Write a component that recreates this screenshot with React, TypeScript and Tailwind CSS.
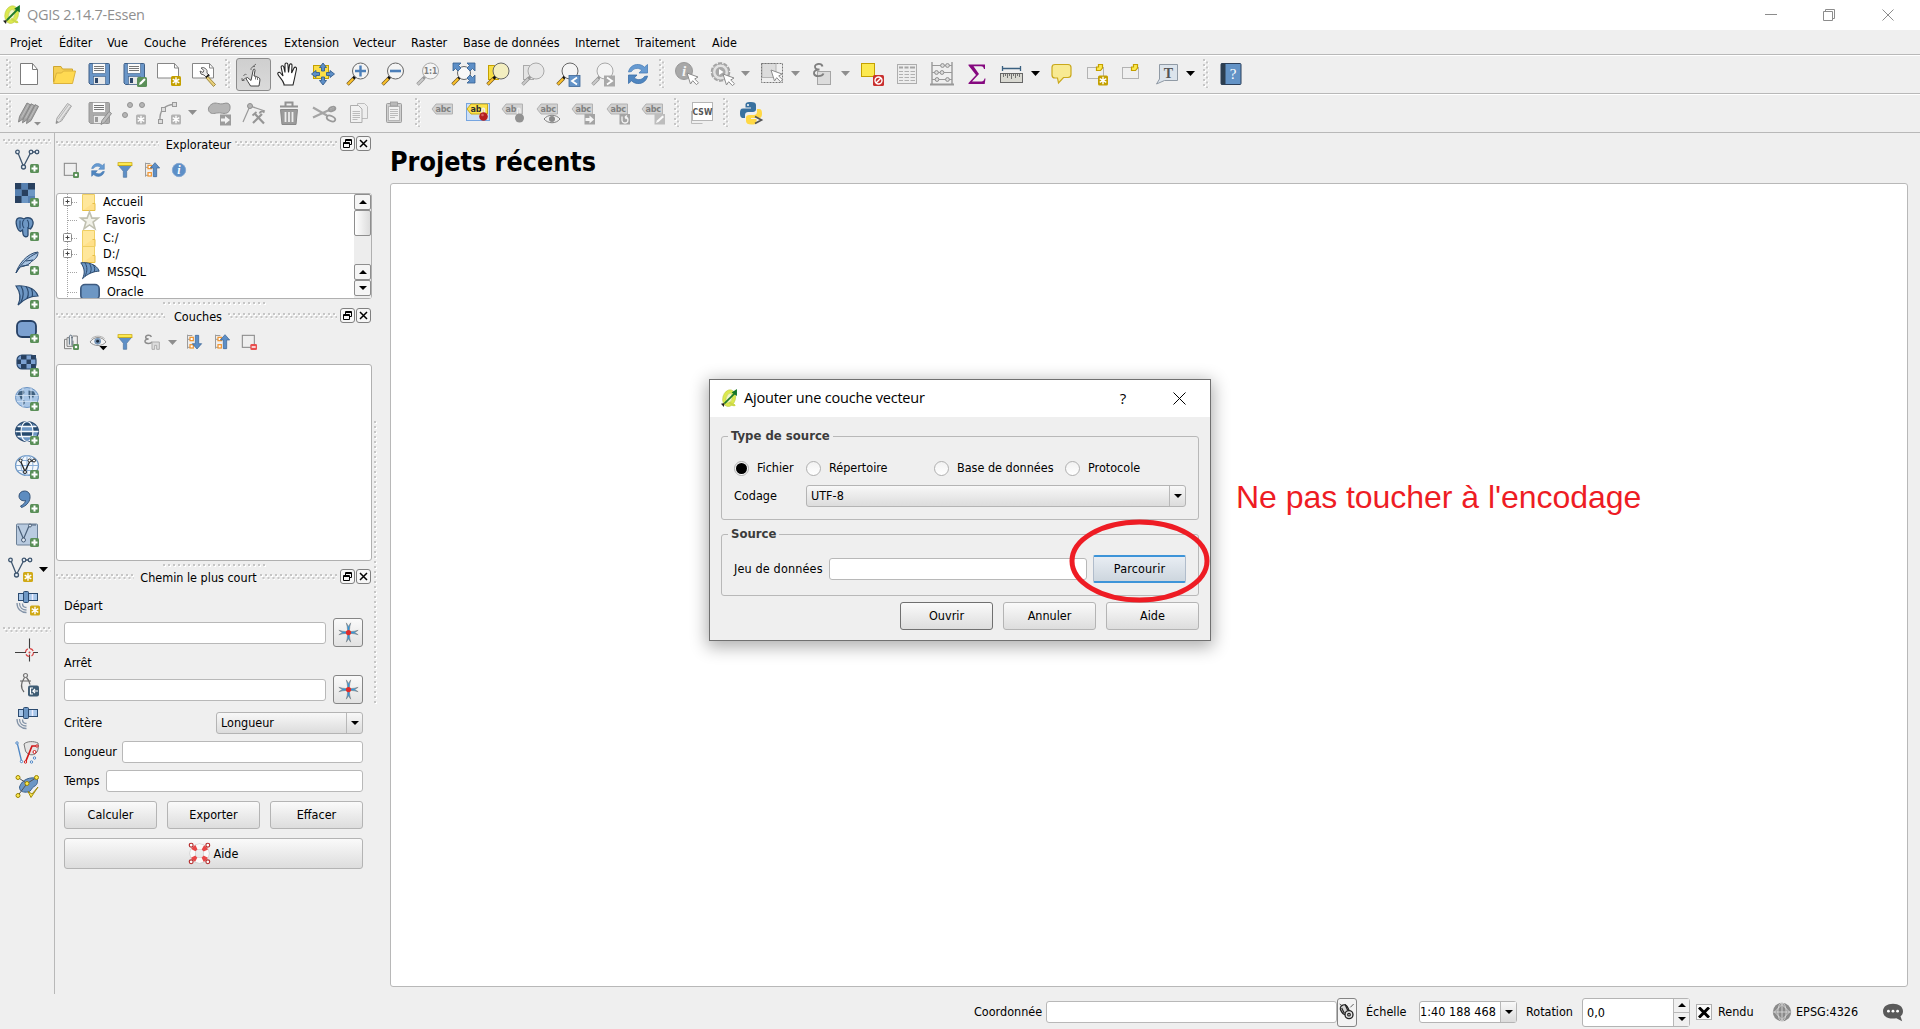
import React, { ReactNode } from "react";

const BLUE = "#6d97c4";
const NAVY = "#2b4a6f";

function Svg({ s = 24, children }: { s?: number; children: ReactNode }) {
  return (
    <svg width={s} height={s} viewBox="0 0 24 24" fill="none" className="block shrink-0 overflow-visible">
      {children}
    </svg>
  );
}

/* ---------- badges ---------- */
const Plus = () => (
  <g>
    <rect x="15" y="15" width="9" height="9" rx="1.5" fill="#5a8f58" />
    <path d="M19.5 16.5v6M16.5 19.5h6" stroke="#fff" strokeWidth="2" />
  </g>
);
const Star = ({ c = "#c4a000", x = 14, y = 14 }: { c?: string; x?: number; y?: number }) => (
  <g transform={`translate(${x} ${y})`}>
    <rect width="10" height="10" rx="1.5" fill={c} />
    <path d="M5 1.2v7.6M1.7 3.1l6.6 3.8M8.3 3.1L1.7 6.9" stroke="#fff" strokeWidth="1.4" />
  </g>
);

/* ---------- file toolbar ---------- */
const NewDoc = () => (
  <Svg>
    <path d="M3.5 1.5h12l5 6v15h-17z" fill="#fff" stroke="#7b7b7b" />
    <path d="M15.500 1.500v6h5" stroke="#7b7b7b" />
  </Svg>
);
const Open = () => (
  <Svg>
    <path d="M1.500 20V4.500h7.500l1.500 2.500h10v4" fill="#f5cf52" stroke="#cfa630" />
    <path d="M1.500 21.500L4.500 11h5l2-2h12l-3 12.500z" fill="#ffda52" stroke="#dbb23c" />
  </Svg>
);
const Floppy = ({ body = "#6a96c8", line = "#3e5f87", slot = "#2e4769" }) => (
  <g>
    <path d="M2.500 1.500h19a1 1 0 0 1 1 1v19a1 1 0 0 1-1 1h-18l-1.500-1.500v-18.500z" fill={body} stroke={line} />
    <rect x="5.500" y="1.500" width="13" height="10" fill="#fafafa" stroke={line} strokeWidth=".6" />
    <path d="M7 4.500h10M7 6.500h10M7 8.500h10" stroke="#777" />
    <rect x="6.500" y="14.500" width="12" height="8" fill="#e9e9e9" stroke={line} strokeWidth=".6" />
    <rect x="8" y="16" width="3" height="5" fill={slot} />
  </g>
);
const Save = () => (<Svg><Floppy /></Svg>);
const SaveAs = () => (
  <Svg>
    <Floppy />
    <rect x="15" y="15" width="10" height="10" rx="1.500" fill="#5a8f58" />
    <path d="M17 23l.8-2.500 4.400-4.200 1.500 1.500-4.300 4.400z" fill="#fff" />
  </Svg>
);
const Composer = () => (
  <Svg>
    <path d="M.5 1.500h17l4 4.500v10h-21z" fill="#fff" stroke="#868686" />
    <path d="M17.500 1.500v4.500h4" stroke="#868686" />
    <Star x={14} y={14} />
  </Svg>
);
const Manager = () => (
  <Svg>
    <path d="M.5 1.500h17l4 4.500v10h-21z" fill="#fff" stroke="#868686" />
    <path d="M17.500 1.500v4.500h4" stroke="#868686" />
    <path d="M9 6a4.300 4.300 0 0 1 6 5l2.500 3-2.500 2-3-3a4 4 0 0 1-4-4l3 1.500 1-2z" fill="#eee" stroke="#555" strokeWidth=".9" />
    <path d="M15.500 14l8 8.500-2 2-7.500-8.500z" fill="#e8cf7a" stroke="#8c7528" strokeWidth=".8" />
    <path d="M14 15.500l3-3" stroke="#111" strokeWidth="1.500" />
  </Svg>
);
const Touch = () => (
  <Svg>
    <path d="M9 22c-1.500-2.500-3-4.500-4-6.500l1.500-1 3.500 3L12.200 7c.4-1.300 2-1 1.800.4L13 13l1.500.3 1.500.7 1.500.5c1.500.6 1.500 2 1.300 3.500L18 23H9.500z" fill="#fff" stroke="#333" strokeWidth=".9" />
    <path d="M10 7c-.5-2 1.500-4 4-3.500M12 3.500L15 1M1 17.500l4.500-3M1 17.500v-2.500M1 17.500h2.500M14.500 13.500v3M16.500 14.500v2.500M2.500 13c.5-1.500 2-2 3-1.500" stroke="#555" strokeWidth=".8" />
  </Svg>
);
const Pan = () => (
  <Svg>
    <path d="M8 22c-1-4-4.500-6.500-6-9.500-1-2 1.200-3 2.500-1.500L7 14 5.200 5.500c-.4-2 2-2.500 2.600-.5L9 10.500V2.500c0-2 2.700-2 2.900 0l.6 8 1-7.500c.4-1.800 2.700-1.400 2.500.5L15.600 11 18 6c1-1.700 2.900-.8 2.500 1l-2 9.500L17 23H8z" fill="#fff" stroke="#222" strokeWidth="1.100" />
  </Svg>
);
const PanSel = () => (
  <Svg>
    <rect x="2.500" y="3.500" width="15" height="13" fill="#fcdf47" stroke="#c4a000" />
    <path d="M12 1l3.500 4.500h-2V9h-3V5.500h-2zM12 23l-3.500-4.500h2V15h3v3.500h2zM.5 12l4.500-3.500v2h3.500v3H5v2zM23.500 12L19 8.500v2h-3.500v3H19v2z" fill="#5d8fc7" stroke="#345e8f" strokeWidth=".9" />
  </Svg>
);
const Lens = ({ gray = false, cx = 14.500, cy = 9, r = 8, fill = "#f4f4f4" }) => (
  <g>
    <path d={`M${cx - r * 0.65} ${cy + r * 0.65}L7 17`} stroke={gray ? "#999" : "#111"} strokeWidth="3" />
    <path d="M7.500 16.500L1.500 22.500" stroke={gray ? "#909090" : "#6b5520"} strokeWidth="3.400" />
    <path d="M7.200 16.800L1.800 22.200" stroke={gray ? "#c9c9c9" : "#fbc02a"} strokeWidth="2.200" />
    <circle cx={cx} cy={cy} r={r} fill={fill} stroke={gray ? "#a9a9a9" : "#666"} />
  </g>
);
const ZoomIn = () => (<Svg><Lens /><path d="M14.500 3.500v11M9 9h11" stroke="#4c7fb9" strokeWidth="2.400" /></Svg>);
const ZoomOut = () => (<Svg><Lens /><path d="M9 9h11" stroke="#4c7fb9" strokeWidth="2.600" /></Svg>);
const ZoomNative = () => (
  <Svg><Lens gray /><text x="14.500" y="12" textAnchor="middle" fontFamily="DejaVu Sans" fontWeight="700" fontSize="8.500" fill="#808080">1:1</text></Svg>
);
const ZoomFull = () => (
  <Svg>
    <Lens cx={13} cy={11} r={6.500} fill="#f8f8f8" />
    <path d="M2 1h8l-2.500 2.500 2.500 2.500-3 3-2.500-2.500L2 9zM24 1v8l-2.500-2.500L19 9l-3-3 2.500-2.500L16 1zM24 21h-8l2.500-2.500L16 16l3-3 2.500 2.500L24 13z" fill="#5d8fc7" stroke="#345e8f" strokeWidth=".8" />
  </Svg>
);
const ZoomSel = () => (<Svg><rect x="2.500" y="3.500" width="10" height="14" fill="#f7df45" stroke="#c4a000" /><Lens cx={15} fill="#f3eec0" /></Svg>);
const ZoomLayer = () => (<Svg><rect x="2.500" y="3.500" width="10" height="14" fill="#e4e4e4" stroke="#aaa" /><Lens gray cx={15} fill="#e8e8e8" /></Svg>);
const ZoomLast = () => (
  <Svg><Lens cx={14} /><rect x="13" y="13.500" width="11" height="11" fill="#6393c8" stroke="#3d6798" strokeWidth=".8" /><path d="M21 15.500L16 19l5 3.500" stroke="#fff" strokeWidth="1.800" /></Svg>
);
const ZoomNext = () => (
  <Svg><Lens gray cx={14} /><rect x="13" y="13.500" width="11" height="11" fill="#a9a9a9" /><path d="M16 15.500l5 3.500-5 3.500" stroke="#fff" strokeWidth="1.800" /></Svg>
);
const Refresh = ({ s = 24 }: { s?: number }) => (
  <Svg s={s}>
    <path d="M2.500 10C3.500 4.500 9 1 15 3c1.500.5 2.500 1.300 3.400 2.200L21.500 2.500V11H13l2.800-3C11.500 5 7.500 6.500 5.500 9.500z" fill="#679bd2" stroke="#4a7fb8" strokeWidth=".8" />
    <path d="M21.500 14c-1 5.500-6.500 9-12.500 7-1.500-.5-2.500-1.300-3.400-2.200L2.500 21.500V13H11l-2.800 3c4.300 3 8.300 1.500 10.300-1.500z" fill="#4f86c0" stroke="#3b6ea8" strokeWidth=".8" />
  </Svg>
);
const Cursor = ({ x = 12, y = 11 }) => (
  <path transform={`translate(${x} ${y})`} d="M0 0l3.500 11 2.200-3.300 3.800 4 2-2-3.800-3.700 3.300-2z" fill="#fff" stroke="#8c8c8c" />
);
const Identify = () => (
  <Svg>
    <circle cx="9" cy="9" r="8.500" fill="#a8a8a8" stroke="#999" />
    <text x="9" y="14" textAnchor="middle" fontFamily="Liberation Serif" fontStyle="italic" fontWeight="700" fontSize="15" fill="#f4f4f4">i</text>
    <Cursor />
  </Svg>
);
const Action = () => (
  <Svg>
    <circle cx="10.500" cy="10" r="8.800" stroke="#a2a2a2" strokeWidth="2" strokeDasharray="4.200 1.320" />
    <circle cx="10.500" cy="10" r="8" fill="#e2e2e2" stroke="#a8a8a8" />
    <circle cx="10.500" cy="10" r="5" fill="#a8a8a8" />
    <path d="M9 7l4.500 3L9 13z" fill="#fff" />
    <Cursor x={13} y={12} />
  </Svg>
);
const SelectBox = () => (
  <Svg>
    <rect x="2" y="1.500" width="14" height="14" fill="#dcdcdc" stroke="#b5b5b5" />
    <rect x="1.500" y="1.500" width="21" height="19" stroke="#777" strokeDasharray="2 1" />
    <Cursor x={11} y={8} />
  </Svg>
);
const Expr = () => (
  <Svg>
    <rect x="7.500" y="9.500" width="13" height="13" fill="#dcdcdc" stroke="#a5a5a5" />
    <path d="M12.500 4.500c-1-4-8-3-7.500.5.200 2 2.500 2.500 4.500 2.500C6.500 7.500 3.500 9 4 11.500c.5 3.500 8 3.500 9.500 0" stroke="#808080" strokeWidth="1.900" />
  </Svg>
);
const Deselect = () => (
  <Svg>
    <rect x="1.500" y="1.500" width="13" height="13" fill="#fce94f" stroke="#c4a000" />
    <rect x="13" y="13" width="11" height="11" rx="1.500" fill="#c9302f" />
    <circle cx="18.500" cy="18.500" r="3.500" stroke="#fff" strokeWidth="1.400" />
    <path d="M16 21l5-5" stroke="#fff" strokeWidth="1.400" />
  </Svg>
);
const TableI = () => (
  <Svg>
    <rect x="2.500" y="2.500" width="19" height="19" fill="#ededed" stroke="#adadad" />
    <path d="M4 5.500h4M9.500 5.500h4M15 5.500h5" stroke="#a5a5a5" strokeWidth="2" />
    <path d="M4 9.500h4M9.500 9.500h4.500M15.500 9.500h4.500M4 12.500h4M9.500 12.500h4.500M15.500 12.500h4.500M4 15.500h4M9.500 15.500h4.500M15.500 15.500h4.500M4 18.500h4M9.500 18.500h4.500M15.500 18.500h4.500" stroke="#b0b0b0" />
  </Svg>
);
const Abacus = () => (
  <Svg>
    <path d="M2 0v22M22 0v22" stroke="#999" strokeWidth="1.400" />
    <path d="M0 22.500h24" stroke="#999" strokeWidth="2" />
    <path d="M2 3.500h20M2 10.500h20M2 17.500h20" stroke="#999" />
    <g fill="#ddd" stroke="#8e8e8e">
      <circle cx="12.500" cy="3.500" r="1.900" /><circle cx="17.500" cy="3.500" r="1.900" />
      <circle cx="6.500" cy="10.500" r="1.900" /><circle cx="12" cy="10.500" r="1.900" />
      <circle cx="7" cy="17.500" r="1.900" /><circle cx="17.500" cy="17.500" r="1.900" />
    </g>
  </Svg>
);
const Sigma = () => (
  <Svg>
    <path d="M3.500 2.500h16.500v4.500h-1c-.5-2-1.500-2.700-3-2.700H8.500L14 12l-7 7.500h9.500c1.800 0 2.500-1 3-3h1l-.8 5.500H3.500v-1l7.500-8L3.500 3.500z" fill="#85087f" />
  </Svg>
);
const Measure = () => (
  <Svg>
    <path d="M2.500 6.500h18M2.500 4v5M20.500 4v5" stroke="#3b6080" strokeWidth="1.300" />
    <rect x=".5" y="11.500" width="22" height="9" fill="#d9d9d2" stroke="#666" />
    <path d="M3.500 12v3M5.500 12v2M7.500 12v4M9.500 12v2M11.500 12v5M13.500 12v2M15.500 12v4M17.500 12v2M19.500 12v3" stroke="#555" strokeWidth=".8" />
  </Svg>
);
const MapTip = () => (
  <Svg>
    <path d="M5 2.500h13c2 0 3 1 3 3v7c0 2-1 3-3 3h-4.500L8.500 21l-1-5H5c-2 0-3-1-3-3V5.500c0-2 1-3 3-3z" fill="#f8ea92" stroke="#c9a81c" strokeWidth="1.200" />
  </Svg>
);
const Bookmark = ({ add = false }: { add?: boolean }) => (
  <Svg>
    <rect x="2.500" y="5.500" width="16" height="11" stroke="#777" strokeDasharray="1 1" />
    <path d="M11.500 5V8.500h4l2-2.500V2.500h-4V5z" fill="#fce94f" stroke="#c4a000" strokeWidth="1.200" />
    {add && <Star x={13} y={13.500} />}
  </Svg>
);
const Annot = () => (
  <Svg>
    <path d="M4.500 2.500h18v16H9.500L1.500 22l3-5z" fill="#dce4ec" stroke="#909aa5" />
    <text x="13.500" y="15.500" textAnchor="middle" fontFamily="Liberation Serif" fontWeight="700" fontSize="14" fill="#555">T</text>
  </Svg>
);
const Book = () => (
  <Svg>
    <rect x="2" y="1.500" width="20" height="21" rx="1" fill="#6393c6" stroke="#2b3f5a" />
    <rect x="2" y="1.500" width="4.500" height="21" fill="#2c3e50" />
    <text x="14" y="17" textAnchor="middle" fontFamily="Liberation Serif" fontSize="15" fill="#fff">?</text>
  </Svg>
);

/* ---------- editing toolbar ---------- */
const Pencils = () => (
  <Svg>
    {[8, 4, 0].map((d) => (
      <g key={d} transform={`translate(${d} ${d / 5})`}>
        <path d="M1.500 21l1-5.500L10 2l3.500 1.800L6 18z" fill="#a4a4a4" stroke="#868686" />
        <path d="M4.500 16.500L11.500 3.500" stroke="#c4c4c4" strokeWidth=".8" />
      </g>
    ))}
    <path d="M17 21h7l-3.500 3.500z" fill="#8e8e8e" />
  </Svg>
);
const Pencil = () => (
  <Svg>
    <path d="M4 22.500l1-5.500L15.500 2.500l4 2.500L9.500 20z" fill="#e3e3e3" stroke="#a5a5a5" />
    <path d="M6 18.500L16.500 4M8.500 19.500l10-14" stroke="#b5b5b5" />
    <path d="M4 22.500l.5-3 2 1.500z" fill="#888" />
  </Svg>
);
const SaveEdits = () => (
  <Svg>
    <Floppy body="#aaa" line="#969696" slot="#999" />
    <path d="M14 23.500l1-4 7-9 2.500 2-7 9z" fill="#bdbdbd" stroke="#8d8d8d" />
  </Svg>
);
const Points = () => (
  <Svg>
    <g fill="#b5b5b5" stroke="#939393"><circle cx="8" cy="4" r="2.500" /><circle cx="20" cy="4" r="2.500" /><circle cx="3" cy="14" r="2.500" /></g>
    <Star c="#b3b3b3" x={14} y={13.500} />
  </Svg>
);
const Curve = () => (
  <Svg>
    <path d="M3 20C2 10 8 3 18 3.500" stroke="#9a9a9a" strokeWidth="1.400" />
    <g fill="#ddd" stroke="#9a9a9a"><rect x="15.500" y="1.500" width="4" height="4" /><rect x="4.500" y="6.500" width="4" height="4" /><rect x="1.500" y="18.500" width="4" height="4" /></g>
    <Star c="#b3b3b3" x={14} y={13.500} />
  </Svg>
);
const MoveFeat = () => (
  <Svg>
    <path d="M5 3c4-2.500 7 1 12-.5 5-1.500 6.500 1.500 6 5-.5 5-5 5.500-9 4.500-4-1-8 2-11-.5C0 9 1.500 5 5 3z" fill="#b5b5b5" stroke="#929292" />
    <rect x="13" y="13.500" width="11" height="11" fill="#9c9c9c" />
    <path d="M14 17.500h4v-2.500l5 4-5 4v-2.500h-4z" fill="#f2f2f2" />
  </Svg>
);
const NodeTool = () => (
  <Svg>
    <path d="M1 21L8 5l15 5" stroke="#9a9a9a" strokeWidth="1.200" />
    <circle cx="8" cy="5" r="2.500" fill="#b5b5b5" stroke="#8f8f8f" />
    <path d="M11 22l9-9M13 13l9 9.500" stroke="#969696" strokeWidth="2.200" />
    <path d="M10.500 14.500l4-3.500M17.500 12.500c1-2.500 3-2.500 5-1" stroke="#969696" strokeWidth="1.800" />
  </Svg>
);
const Trash = () => (
  <Svg>
    <path d="M3.500 8.500h17L19 23.500H5z" fill="#9b9b9b" stroke="#888" />
    <path d="M8.500 11v10M12 11v10M15.500 11v10" stroke="#ededed" strokeWidth="1.800" />
    <path d="M3 5.500h18M8.500 5V1.500h7V5" stroke="#929292" strokeWidth="2" />
  </Svg>
);
const Cut = () => (
  <Svg>
    <path d="M1 6.500l14 8M1 16.500l14-6.500 8-3" stroke="#a5a5a5" strokeWidth="2.200" />
    <ellipse cx="19" cy="17.500" rx="4.500" ry="2.500" transform="rotate(25 19 17.500)" stroke="#9a9a9a" strokeWidth="1.800" />
    <ellipse cx="20" cy="8" rx="3.500" ry="2" transform="rotate(-20 20 8)" stroke="#9a9a9a" strokeWidth="1.800" />
  </Svg>
);
const Copy = () => (
  <Svg>
    <path d="M10.500 2.500h7l3 3v12h-10z" fill="#eee" stroke="#bdbdbd" />
    <path d="M3.500 4.500h8l3.500 3.500v13.500H3.500z" fill="#f1f1f1" stroke="#adadad" />
    <path d="M5.500 10.500h7.500M5.500 12.500h7.500M5.500 14.500h7.500M5.500 16.500h7.500M5.500 18.500h5" stroke="#bcbcbc" />
  </Svg>
);
const Paste = () => (
  <Svg>
    <rect x="4.500" y="2.500" width="15" height="19" rx="1" fill="#cfcfcf" stroke="#9d9d9d" />
    <rect x="6.500" y="5.500" width="11" height="14" fill="#f1f1f1" stroke="#b5b5b5" />
    <rect x="8.500" y="1" width="7" height="4" fill="#b9b9b9" stroke="#999" strokeWidth=".8" />
    <path d="M8 8.500h8M8 10.500h8M8 12.500h8M8 14.500h8M8 16.500h5" stroke="#bcbcbc" />
  </Svg>
);

/* ---------- label toolbar ---------- */
const Tag = ({ yellow = false, t = "abc" }: { yellow?: boolean; t?: string }) => (
  <g>
    <path d="M1 8l4-5h16.500v10H5z" fill={yellow ? "#fce34b" : "#d2d2d2"} stroke={yellow ? "#c9a81c" : "#b2b2b2"} />
    <text x="4.500" y="11" fontFamily="DejaVu Sans" fontWeight="700" fontSize="9" letterSpacing="-.3" fill={yellow ? "#2f2f2f" : "#808080"}>{t}</text>
  </g>
);
const Label0 = () => (<Svg><Tag /></Svg>);
const Label1 = () => (
  <Svg>
    <rect x=".5" y="2.500" width="23" height="17" fill="#cfe0f5" stroke="#76a5e0" />
    <Tag yellow t="ab" />
    <path d="M16 13V8.500c0-1.500 2.500-1.500 2.500 0V13" stroke="#eee" strokeWidth="1.600" />
    <circle cx="17.500" cy="15.500" r="4.300" fill="#b52020" />
    <circle cx="16.500" cy="14" r="1.300" fill="#d46060" />
  </Svg>
);
const Label2 = () => (
  <Svg><Tag t="ab" /><path d="M16.500 13V8.500c0-1.500 2.500-1.500 2.500 0V13" stroke="#eee" strokeWidth="1.600" /><circle cx="18.500" cy="17" r="4.500" fill="#929292" /></Svg>
);
const Label3 = () => (
  <Svg><Tag /><path d="M8 18c4-5 12-5 16 0-4 5-12 5-16 0z" fill="#eee" stroke="#808080" /><circle cx="16" cy="18" r="3" fill="#8a8a8a" /></Svg>
);
const Label4 = () => (
  <Svg><Tag /><rect x="13.500" y="13" width="10.500" height="10.500" fill="#a4a4a4" /><path d="M14.500 17h4v-2.500l4.500 4-4.500 4V20h-4z" fill="#f4f4f4" /></Svg>
);
const Label5 = () => (
  <Svg><Tag /><rect x="13.500" y="13" width="10.500" height="10.500" fill="#a4a4a4" /><path d="M16 15.500v4a3 3 0 1 0 3-3.500M19 16l2-1.500M19 16l1.500 2" stroke="#f4f4f4" strokeWidth="1.300" /></Svg>
);
const Label6 = () => (
  <Svg><Tag /><rect x="13.500" y="13" width="10.500" height="10.500" fill="#bdbdbd" /><path d="M15 22l1-2.500 5.500-5 1.500 1.500-5.500 5z" fill="#fafafa" /></Svg>
);
const Csw = () => (
  <Svg>
    <path d="M1.500 10v12.500h11" stroke="#bbb" />
    <rect x="2.500" y="1.500" width="20" height="18" fill="#fff" stroke="#b5b5b5" />
    <text x="12.500" y="13.500" textAnchor="middle" fontFamily="DejaVu Sans" fontWeight="700" fontSize="8.500" letterSpacing=".1" fill="#555">CSW</text>
  </Svg>
);
const Python = () => (
  <Svg>
    <path d="M12 1C6.500 1 6.500 2.500 6.500 4v2.500H12v1H4C1.500 7.500 1 9.500 1 12s.5 5 3 5h2v-3c0-2 1.500-3 3-3h5c1.500 0 3-1 3-2.500V4c0-2-1.500-3-5-3z" fill="#39719f" />
    <circle cx="9" cy="4" r="1" fill="#fff" />
    <path d="M12.500 23.500c5.500 0 5-1.500 5-3V18H12v-1h8c2.500 0 3-2 3-4.500s-.5-4.500-3-4.500h-2v3c0 2-1.500 3-3 3h-5c-1.500 0-3 1-3 2.500V20c0 2.500 2 3.500 5.500 3.500z" fill="#ffd845" />
    <path d="M16 15.500l6.500 3.500-6.500 3.500" stroke="#555" strokeWidth="1.700" />
  </Svg>
);

/* ---------- layer toolbar ---------- */
const VectorLine = ({ c = "#3f566f" }) => (
  <g stroke={c} strokeWidth="1.300" fill="#e6edf5">
    <path d="M3 4l5.500 13.500L15.500 4M18 3h3" fill="none" />
    <circle cx="2.500" cy="3" r="1.800" /><circle cx="16" cy="3" r="1.800" /><circle cx="22" cy="3" r="1.800" /><circle cx="8.500" cy="18" r="2" />
  </g>
);
const AddVector = () => (<Svg><VectorLine /><Plus /></Svg>);
const AddRaster = () => (
  <Svg>
    <rect width="20" height="20" fill={BLUE} />
    <path d="M0 0h6.500v6.500H0zM13 0h7v6.500h-7zM6.500 6.500H13V13H6.500zM0 13h6.500v7H0z" fill="#28405f" />
    <path d="M6.500 0H13v6.500H6.500zM0 6.500h6.500V13H0zM13 13h7v7h-7z" fill="#5680b0" />
    <Plus />
  </Svg>
);
const Elephant = () => (
  <Svg>
    <path d="M2 2c2-2 5-1 7 0 2-1.500 6-2 8 .500 2 3 .5 7-1.500 9.500l-2.500-1v7c0 2.500-4.500 2.500-5-1l-.5-4-2 1.500C2 13 0 5 2 2z" fill={BLUE} stroke={NAVY} strokeWidth="1.300" />
    <path d="M9 3c-2 1-2 6 0 8M12 3c2 1 2 6 1 8M5 3.500v8" stroke={NAVY} strokeWidth="1.100" />
    <Plus />
  </Svg>
);
const Feather = () => (
  <Svg>
    <path d="M1 22C3 14 12 2 23 1c0 4-2 7-6 9-2 3-6 5-12 6z" fill="#a9c4e2" stroke={NAVY} strokeWidth="1" />
    <path d="M1 22C6 13 13 6 22 2M7 15l7-1M11 10l7-1" stroke={NAVY} strokeWidth="1" />
    <Plus />
  </Svg>
);
const SailShape = () => (
  <g stroke={NAVY} strokeWidth="1.200">
    <path d="M1 1c7-1 19 1 22 10-6 0-14 3-20 9 3-6 3-12-2-19z" fill={BLUE} />
    <path d="M6 1c3 5 3 10 0 16M11 1.500c3 4 3 8 1 12M16 3.500c2 3 2 5 1 8.500" />
  </g>
);
const AddMssql = () => (<Svg><SailShape /><Plus /></Svg>);
const AddOracle = () => (<Svg><rect x="2" y="2" width="19" height="16" rx="5" fill="#7ba0d0" stroke="#253f63" strokeWidth="1.800" /><Plus /></Svg>);
const AddOracleR = () => (
  <Svg>
    <rect x="2" y="2" width="19" height="14" rx="5" fill="#7ba0d0" />
    <path d="M6 2h5.500v4.500H6zM16 2h5v4.500h-5zM11.500 6.500H16V11h-4.500zM2 6.500h4V11H2zM6 11h5.500v5H6zM16 11h5v5h-5z" fill="#28405f" />
    <rect x="2" y="2" width="19" height="14" rx="5" stroke={NAVY} strokeWidth="1.200" />
    <Plus />
  </Svg>
);
const AddWms = () => (
  <Svg>
    <ellipse cx="12" cy="10.500" rx="11.500" ry="10" fill="#a9c6e6" stroke="#6b93c2" />
    <path d="M4 4.500l5-1 .5 2.500-2.500 2.500.500 2.500-1.500 2-1.500-4-2-1zM13.500 3.500l5.500 1 1.500 3.500-1.500.5-1 3-1.500-3-1.500 0 0 4.500-1.500-4zM8 13l2 1-.5 3-1.500 1z" fill="#40607f" />
    <path d="M.5 8.500h23M8 1v19M16 1v19M2 14.500h20" stroke="#d5e3f3" strokeWidth=".8" />
    <Plus />
  </Svg>
);
const AddWcs = () => (
  <Svg>
    <ellipse cx="12" cy="10.500" rx="11.500" ry="10" fill="#6d97c4" stroke={NAVY} strokeWidth="1.200" />
    <path d="M7 1.500h10l1.500 4h-13zM1 10.500h5.500v5H2.500zM6.500 10.500h11v5h-11zM18 5.500h4L23 10h-5zM2 5.500h4v5H1z" fill="#24496e" />
    <path d="M.5 10.500h23M2.500 5.500h19M2.500 15.500h19" stroke="#f4f8fc" strokeWidth="1.300" />
    <ellipse cx="12" cy="10.500" rx="6" ry="10" stroke="#f4f8fc" strokeWidth="1.200" />
    <Plus />
  </Svg>
);
const AddWfs = () => (
  <Svg>
    <ellipse cx="12" cy="10.500" rx="11.500" ry="10" fill="#f4f8fc" stroke="#6d97c4" strokeWidth="1.200" />
    <path d="M.5 10.500h23M2.500 5.500h19M2.500 15.500h19M12 .5v20" stroke="#8db0d8" />
    <ellipse cx="12" cy="10.500" rx="6" ry="10" stroke="#8db0d8" />
    <path d="M5.500 6l4.500 10.500L15 6h4" stroke="#222" strokeWidth="1.300" />
    <g fill="#fff" stroke="#222"><circle cx="5.500" cy="5.500" r="1.500" /><circle cx="14.500" cy="5.500" r="1.500" /><circle cx="19" cy="5.500" r="1.500" /><circle cx="10" cy="17" r="1.500" /></g>
    <Plus />
  </Svg>
);
const AddCsv = () => (
  <Svg>
    <path d="M9.500 2c4 0 6 3 5.500 7-.5 4.500-4 8-8.500 9.500l-1-1.500c3-1.500 4.500-3 5-5.500-3.500 1-6.500-1-6.500-4.500C4 4 6.500 2 9.500 2z" fill="#5d8cc0" stroke={NAVY} strokeWidth=".9" />
    <Plus />
  </Svg>
);
const AddVirtual = () => (
  <Svg>
    <rect x="1.500" y="1" width="21" height="21" rx="1" fill="#b9cbe0" stroke="#6a7f96" />
    <path d="M3 3l5.500 13L14 3M16 2h5" stroke="#4a5f78" strokeWidth="1.200" />
    <circle cx="8.500" cy="17" r="2" fill="#dde6f0" stroke="#4a5f78" />
    <circle cx="15" cy="2.500" r="1.500" fill="#dde6f0" stroke="#4a5f78" />
    <Plus />
  </Svg>
);
const NewVector = () => (<Svg><VectorLine /><Star c="#d0a916" x={15} y={15} /></Svg>);
const Sat = ({ star = false }: { star?: boolean }) => (
  <Svg>
    <rect x="3.500" y="2.500" width="7" height="7" fill="#a9c8ea" stroke={NAVY} /><rect x="13.500" y="2.500" width="9" height="7" fill="#a9c8ea" stroke={NAVY} />
    <path d="M17.500 3v6" stroke="#eef" strokeWidth="1.500" />
    <rect x="8.500" y=".5" width="5" height="11" rx="1" fill="#6d97c4" stroke={NAVY} />
    <path d="M2 12c0 6 4 9.500 9.500 9.500M4.500 12c0 4.500 3 7 7 7M7.500 12.500c0 2.500 1.500 4 4 4" stroke="#8494a8" strokeWidth="1.300" />
    {star && <Star c="#d0a916" x={15} y={14.500} />}
  </Svg>
);
const Cross = () => (
  <Svg>
    <path d="M14.500 0v10M14.500 16v7M0 14h11M18 14h5" stroke="#3d3d3d" strokeWidth="1.100" transform="translate(0 -.5)" />
    <circle cx="14.500" cy="13.500" r="4" stroke="#d84040" strokeWidth="1.200" strokeDasharray="4 2.300" />
    <circle cx="14.500" cy="13.500" r="1" fill="#d84040" />
  </Svg>
);
const Compass = () => (
  <Svg>
    <circle cx="10.500" cy="2.500" r="2" stroke="#777" strokeWidth="1.200" />
    <path d="M9.500 4.500C6.500 9 4.500 14 9 19M11.500 4.500c2 2 3 4 3.500 7M5 8h11" stroke="#666" strokeWidth="1.200" />
    <rect x="13" y="12.500" width="11" height="11" rx="2" fill="#3e5c74" />
    <path d="M18 15h-2.500v6H18M23 18h-5l2-2M18 18l2 2" stroke="#fff" strokeWidth="1.100" />
  </Svg>
);
const Simplify = () => (
  <Svg>
    <path d="M2 1l4.500 19" stroke="#4d86c5" strokeWidth="1.300" />
    <path d="M9 3c3-3 10-3 14-1 1 4 0 9-3 11-4 2-8 0-9.500-3z" fill="#e4e4e4" stroke="#777" />
    <path d="M10.500 21L17 5h4.500" stroke="#d11919" strokeWidth="1.700" />
    <g fill="#fff" stroke="#4d86c5"><circle cx="2" cy="2" r="1.200" /><circle cx="6.500" cy="20.500" r="1.200" /><circle cx="16.500" cy="21" r="1.200" /><circle cx="19.500" cy="17" r="1.200" /></g>
    <g fill="#fff" stroke="#d11919"><circle cx="10.500" cy="21" r="1.200" /><circle cx="19.500" cy="11" r="1.500" /><circle cx="22" cy="5" r="1.200" /></g>
  </Svg>
);
const Topo = () => (
  <Svg>
    <path d="M4.500 12C7 4 16 1.500 22 3.500c1.500 4-.5 7-3 8-2.500 1-2.500 5-6 5.500-4 .5-8.500 0-8.500-5z" fill="#6d97c4" stroke="#3a618e" />
    <path d="M3 2.500l9 6 9.500-6M3 20.500l9-12" stroke="#555" />
    <g fill="#fce94f" stroke="#9a8200"><circle cx="3" cy="2.500" r="2" /><circle cx="21.500" cy="2.500" r="2" /><circle cx="12" cy="8.500" r="2" /><circle cx="3" cy="20.500" r="2" /></g>
    <path d="M13 16.500l4 2.500 6-7-7 10.500z" fill="#fce94f" stroke="#9a8200" strokeWidth=".9" />
  </Svg>
);

/* ---------- dock icons (16px drawings on a 24 grid) ---------- */
const AddSel = () => (
  <Svg s={16}>
    <rect x="2" y="2" width="18" height="18" stroke="#8b8b8b" strokeWidth="1.600" />
    <rect x="15" y="15" width="9" height="9" rx="2" fill="#5a8f58" /><circle cx="19.500" cy="19.500" r="2" fill="#fff" />
  </Svg>
);
const Funnel = () => (
  <Svg s={16}>
    <path d="M2 5h20l-7.500 9v9h-5v-9z" fill="#5d8fc7" stroke="#4a719d" />
    <rect x="1.500" y="1" width="21" height="4.500" fill="#fce94f" stroke="#c4a000" />
  </Svg>
);
const TreeArrow = ({ down = false }: { down?: boolean }) => (
  <Svg s={16}>
    <path d="M2.250 1v21M2 8h4M2 20h4M1.500 2.250h8" stroke="#9c9c9c" strokeWidth="1.500" />
    <rect x="6" y="5" width="5" height="5" fill="#fff" stroke="#f0932b" strokeWidth="1.800" />
    <rect x="6" y="16" width="5" height="5" fill="#fff" stroke="#f0932b" strokeWidth="1.800" />
    <path d={down ? "M16.500 22.500l-7-8H14V2h5v12.500h4.500z" : "M16.500 1l-7 8H14v13h5V9h4.500z"} fill="#5d8fc7" stroke="#345e8f" />
  </Svg>
);
const Info = () => (
  <Svg s={16}>
    <circle cx="12" cy="12" r="10" fill="#5d8fc7" stroke="#86a9d3" strokeWidth="1.500" />
    <text x="12" y="18" textAnchor="middle" fontFamily="Liberation Serif" fontStyle="italic" fontWeight="700" fontSize="18" fill="#fff">i</text>
  </Svg>
);
const AddGroup = () => (
  <Svg s={16}>
    <path d="M6 8H2.250v14H13M9 5.500H6v13h9V10M12 5.500h3M14 3h7.500v12" stroke="#808080" strokeWidth="1.500" />
    <path d="M9.500 16V5c0-4.500 4-4.500 4 0v12.500" stroke="#4f6478" strokeWidth="1.500" />
    <rect x="15" y="15" width="9" height="9" rx="2" fill="#5a8f58" /><circle cx="19.500" cy="19.500" r="2" fill="#fff" />
  </Svg>
);
const Eye = () => (
  <Svg s={16}>
    <path d="M0 12C6 3 18 3 24 12c-6 7-18 7-24 0z" fill="#f4f4f4" stroke="#888" strokeWidth="1.400" />
    <path d="M2 7C7 2 17 2 22 7" stroke="#aaa" strokeWidth="1.300" />
    <circle cx="11.500" cy="11" r="5" fill="#7796b8" /><circle cx="11.500" cy="11" r="2.200" fill="#1d2c3d" />
    <path d="M14 18h12l-6 6.500z" fill="#000" />
  </Svg>
);
const Eps = () => (
  <Svg s={16}>
    <path d="M11 4.500c-1-4-9-3-8.500.5.200 2 2.500 2.500 4.500 2.500-3 0-6 1.500-5.500 4 .5 3.500 9 3.500 10.500 0" stroke="#8c8c8c" strokeWidth="2.200" />
    <path d="M12 12h11v11h-4v-6h-3v6h-4z" fill="#ddd" stroke="#a9a9a9" strokeWidth="1.400" />
  </Svg>
);
const RemoveSel = () => (
  <Svg s={16}>
    <rect x="2" y="2" width="18" height="18" stroke="#8b8b8b" strokeWidth="1.600" />
    <rect x="14" y="15" width="10" height="9" rx="2" fill="#e84f4f" /><path d="M16 19.500h6" stroke="#fff" strokeWidth="2.200" />
  </Svg>
);
const Logo = ({ s = 20 }: { s?: number }) => (
  <Svg s={s}>
    <ellipse cx="11.500" cy="11.500" rx="6.500" ry="9.500" transform="rotate(15 11.500 11.500)" stroke="#dbe94e" strokeWidth="5" />
    <ellipse cx="11.500" cy="11.500" rx="9" ry="12" transform="rotate(15 11.500 11.500)" stroke="#b9c440" strokeWidth=".7" />
    <ellipse cx="11.500" cy="11.500" rx="4" ry="7" transform="rotate(15 11.500 11.500)" stroke="#b9c440" strokeWidth=".7" fill="#f2f6c8" />
    <path d="M11 18c3-1 5 5 9 3" stroke="#ccd848" strokeWidth="3" />
    <path d="M5 19L19 5" stroke="#1f7a2c" strokeWidth="2.400" />
    <path d="M22.500-1.500v10L15 3.500z" fill="#14742a" /><path d="M0 19.500l5-1-1 5.500z" fill="#222" />
  </Svg>
);

/* ---------- shared pieces ---------- */
function Grip({ h, w, className = "" }: { w: number; h: number; className?: string }) {
  const id = `grip-${w}-${h}`;
  const tall = h > w;
  return (
    <svg width={w} height={h} className={"block shrink-0 " + className}>
      <defs>
        <pattern id={id} width={tall ? 6 : 5} height={tall ? 5 : 6} patternUnits="userSpaceOnUse">
          {tall ? (
            <>
              <rect x="1" y="1" width="2" height="2" fill="#fff" /><rect width="2" height="2" fill="#c6c6c6" />
              <rect x="4" y="3.500" width="2" height="2" fill="#fff" /><rect x="3" y="2.500" width="2" height="2" fill="#c6c6c6" />
            </>
          ) : (
            <>
              <rect x="1" y="1" width="2" height="2" fill="#fff" /><rect width="2" height="2" fill="#c6c6c6" />
              <rect x="3.500" y="4" width="2" height="2" fill="#fff" /><rect x="2.500" y="3" width="2" height="2" fill="#c6c6c6" />
            </>
          )}
        </pattern>
      </defs>
      <rect width={w} height={h} fill={`url(#${id})`} />
    </svg>
  );
}
function Dots({ w, h }: { w: number; h: number }) {
  return (
    <svg width={w} height={h} className="block">
      <defs>
        <pattern id={`dots-${w}`} width="5" height="5" patternUnits="userSpaceOnUse">
          <rect x="1" y="1" width="2" height="2" fill="#fff" /><rect width="2" height="2" fill="#c6c6c6" />
        </pattern>
      </defs>
      <rect width={w} height={h} fill={`url(#dots-${w})`} />
    </svg>
  );
}
const Cell = ({ children, on = false }: { children: ReactNode; on?: boolean }) => (
  <div className={"flex w-[35px] shrink-0 items-center justify-center pr-px " + (on ? "mt-0.5 h-[33px] rounded-[3px] border border-[#8c8c8c] bg-gradient-to-b from-[#cfcfcf] to-[#dadada]" : "h-[34px]")}>{children}</div>
);
const Down = ({ c = "#000" }: { c?: string }) => (
  <div className="flex w-[15px] items-center justify-center pr-1">
    <svg width="9" height="5" viewBox="0 0 9 5" className="shrink-0"><path d="M0 0h9L4.500 5z" fill={c} /></svg>
  </div>
);
const Sep = () => (<div className="flex w-[14px] justify-center pr-[3px]"><Grip w={6} h={29} /></div>);
const Tri = ({ up = false }: { up?: boolean }) => (
  <svg width="8" height="4" viewBox="0 0 8 4" className="block shrink-0"><path d={up ? "M0 4h8L4 0z" : "M0 0h8L4 4z"} fill="#000" /></svg>
);
const Btn = ({ children, className = "" }: { children: ReactNode; className?: string }) => (
  <button className={"flex h-7 w-[93px] items-center justify-center rounded-[3px] border border-[#b4b4b4] bg-gradient-to-b from-[#fafafa] to-[#dddddd] " + className}>{children}</button>
);
const Field = ({ className = "" }: { className?: string }) => (
  <div className={"h-[22px] rounded-[3px] border border-[#b8b8b8] bg-white " + className} />
);
const Combo = ({ children, className = "" }: { children: ReactNode; className?: string }) => (
  <div className={"flex h-[22px] items-center rounded-[3px] border border-[#b4b4b4] bg-gradient-to-b from-[#f8f8f8] to-[#dcdcdc] " + className}>
    <span className="flex-1 pl-1">{children}</span>
    <div className="flex h-full w-[16px] items-center justify-center border-l border-[#b8b8b8]"><Tri /></div>
  </div>
);
function DockTitle({ title, left, right }: { title: string; left: number; right: number }) {
  return (
    <div className="flex h-[17px] items-center pr-px">
      <Grip w={left} h={6} className="-mt-0.5" />
      <span className="flex-1 whitespace-nowrap pl-[3px] text-center">{title}</span>
      <Grip w={right} h={6} className="-mt-0.5 mr-[3px]" />
      <div className="-mt-[3px] mr-px flex h-[15px] w-[15px] items-center justify-center rounded-[3px] border border-[#808080] bg-[#f6f6f6]">
        <svg width="9" height="9" viewBox="0 0 9 9" fill="none" stroke="#000"><path d="M2.500 3V.5h6v5H6.500M2.500 1.500h6" /><path d="M.5 3.500h6v5h-6zM.5 4.500h6" /></svg>
      </div>
      <div className="-mt-[3px] flex h-[15px] w-[15px] items-center justify-center rounded-[3px] border border-[#808080] bg-[#f6f6f6]">
        <svg width="9" height="9" viewBox="0 0 9 9" stroke="#000" strokeWidth="1.500"><path d="M1 1l7 7M8 1L1 8" /></svg>
      </div>
    </div>
  );
}
const DCell = ({ children, w = "w-[27px]" }: { children: ReactNode; w?: string }) => (
  <div className={"flex items-center justify-center " + w}>{children}</div>
);

const Folder = () => (
  <svg width="14" height="17" viewBox="0 0 14 17" className="block"><path d="M.5.5h12v16H.5z" fill="#ffe79b" stroke="#efcf63" /><path d="M10.500 9.500h2.500v7H.5" stroke="#e6bf45" fill="#ffe08a" /></svg>
);
const Fav = () => (
  <Svg s={19}><path d="M12 1l3 8h8l-6.500 5 2.500 8.500-7-5-7 5L7.500 14 1 9h8z" fill="#f1f1e8" stroke="#c0c0b0" strokeWidth="2" /></Svg>
);
const tree: { t: string; h: string; icon: ReactNode; box?: boolean }[] = [
  { t: "Accueil", h: "h-4", icon: <Folder />, box: true },
  { t: "Favoris", h: "h-5", icon: <Fav /> },
  { t: "C:/", h: "h-4", icon: <Folder />, box: true },
  { t: "D:/", h: "h-4", icon: <Folder />, box: true },
  { t: "MSSQL", h: "h-5", icon: <Svg s={20}><SailShape /></Svg> },
  { t: "Oracle", h: "h-5", icon: <Svg s={20}><rect x="1" y="3" width="22" height="18" rx="5" fill="#6d97c4" stroke="#3d5a7f" strokeWidth="2" /></Svg> },
];
const menu: [string, string][] = [
  ["Projet", "w-[49px]"], ["Éditer", "w-[48px]"], ["Vue", "w-[37px]"], ["Couche", "w-[57px]"], ["Préférences", "w-[83px]"],
  ["Extension", "w-[69px]"], ["Vecteur", "w-[58px]"], ["Raster", "w-[52px]"], ["Base de données", "w-[112px]"],
  ["Internet", "w-[60px]"], ["Traitement", "w-[77px]"], ["Aide", "w-[40px]"],
];

const PickIcon = () => (
  <Svg s={21}>
    <g stroke="#808080" strokeWidth=".7" fill="#2f96dd">
      <path d="M9.500 1l2.500 4 2.500-4-1 4-.5 5h-2l-.5-5zM9.500 23l2.500-4 2.500 4-1-4-.5-5h-2l-.5 5zM1 9.500l4 2.500-4 2.500 4-1 5-.5v-2l-5-.5zM23 9.500l-4 2.500 4 2.500-4-1-5-.5v-2l5-.5z" />
    </g>
    <circle cx="12" cy="12" r="3" fill="#e02c2c" />
  </Svg>
);
const Buoy = () => (
  <Svg s={21}>
    <circle cx="12" cy="12" r="8" stroke="#c9c9c9" strokeWidth="7" />
    <circle cx="12" cy="12" r="8" stroke="#fafafa" strokeWidth="5.600" />
    <circle cx="12" cy="12" r="8" stroke="#e84848" strokeWidth="5.600" strokeDasharray="5 7.566" strokeDashoffset="-3.780" />
    <g stroke="#b52a2a" fill="#fff" strokeWidth="1.300"><circle cx="2.500" cy="2.500" r="2.200" /><circle cx="21.500" cy="2.500" r="2.200" /><circle cx="2.500" cy="21.500" r="2.200" /><circle cx="21.500" cy="21.500" r="2.200" /></g>
  </Svg>
);
const PickBtn = () => (
  <div className="flex h-[29px] w-[30px] items-center justify-center rounded-[3px] border border-[#858585] bg-gradient-to-b from-[#fafafa] to-[#e2e2e2]"><PickIcon /></div>
);
const Radio = ({ t, on = false, w = "" }: { t: string; on?: boolean; w?: string }) => (
  <div className={"flex items-center gap-[8px] " + w}>
    <span className="flex h-[15px] w-[15px] items-center justify-center rounded-full border border-[#b0b0b0] bg-gradient-to-b from-[#f2f2f2] to-white">
      {on && <span className="h-[11px] w-[11px] rounded-full bg-black" />}
    </span>
    <span className="whitespace-nowrap">{t}</span>
  </div>
);

function Dialog() {
  return (
    <div className="absolute left-[709px] top-[379px] flex h-[262px] w-[502px] flex-col border border-[#707070] bg-[#efefef] shadow-[0_4px_16px_2px_rgba(0,0,0,0.32)]">
      <div className="flex h-[37px] shrink-0 items-center bg-white pb-px pl-[11px] pr-[24px] font-['Open_Sans',sans-serif] text-[14.500px] [font-stretch:normal]">
        <Logo s={17} />
        <span className="ml-[6px] flex-1 tracking-[-0.2px]">Ajouter une couche vecteur</span>
        <span className="mr-[-1px] w-[12px] text-center text-[15px]">?</span>
        <svg width="13" height="13" viewBox="0 0 13 13" stroke="#000" className="ml-[45px]"><path d="M.5.5l12 12M12.500.5l-12 12" /></svg>
      </div>
      <fieldset className="ml-[11px] mt-[11px] h-[92px] w-[478px] rounded-[3px] border border-[#b8b8b8]">
        <legend className="ml-[6px] h-4 px-[3px] text-[13px] font-bold leading-4 text-[#3c3c3c]">Type de source</legend>
        <div className="mt-[15px] flex h-[18px] items-center pl-[12px]">
          <Radio t="Fichier" on w="w-[72px]" />
          <Radio t="Répertoire" w="w-[128px]" />
          <Radio t="Base de données" w="w-[131px]" />
          <Radio t="Protocole" />
        </div>
        <div className="mt-[8px] flex items-center pl-[12px]">
          <span className="w-[72px]">Codage</span>
          <Combo className="w-[380px]">UTF-8</Combo>
        </div>
      </fieldset>
      <fieldset className="ml-[11px] mt-[6px] h-[70px] w-[478px] rounded-[3px] border border-[#b8b8b8]">
        <legend className="ml-[6px] h-4 px-[3px] text-[13px] font-bold leading-4 text-[#3c3c3c]">Source</legend>
        <div className="mt-[13px] flex items-center pl-[12px]">
          <span className="w-[95px] whitespace-nowrap tracking-[0.15px]">Jeu de données</span>
          <Field className="w-[258px]" />
          <button className="ml-[6px] flex h-7 w-[93px] items-center justify-center rounded-[2px] border-x border-y-2 border-x-[#b0bccb] border-y-[#3d94d8] bg-gradient-to-b from-[#e8edf3] to-[#cdd6de] tracking-[0.15px]">Parcourir</button>
        </div>
      </fieldset>
      <div className="mt-[6px] flex justify-end gap-[10px] pr-[11px]">
        <Btn className="!border-[#707070]">Ouvrir</Btn>
        <Btn>Annuler</Btn>
        <Btn>Aide</Btn>
      </div>
    </div>
  );
}

export default function App() {
  return (
    <div className="relative flex h-[1029px] w-[1920px] flex-col overflow-hidden bg-[#efefef] font-['DejaVu_Sans_Condensed','DejaVu_Sans',sans-serif] text-[12.500px] leading-4 text-black [font-stretch:condensed]">
      {/* title bar */}
      <div className="flex h-[30px] shrink-0 items-center bg-white pb-px pl-[3px] font-['Open_Sans',sans-serif] text-[14.500px] text-[#8f8f8f] [font-stretch:normal]">
        <Logo s={18} />
        <span className="ml-[6px] flex-1 tracking-[-0.25px]">QGIS 2.14.7-Essen</span>
        <svg width="130" height="14" viewBox="0 0 130 14" fill="none" stroke="#8c8c8c" className="mr-[25px]">
          <path d="M0 6.500h12M58.500 3.500h9v9h-9zM60.500 3v-1.500h9v9H68M117.500 1.500l11 11M128.500 1.500l-11 11" />
        </svg>
      </div>
      {/* menu bar */}
      <div className="flex h-[25px] shrink-0 items-center border-b border-[#b8b8b8] pl-[10px] pt-px">
        {menu.map(([m, w]) => (<span key={m} className={"whitespace-nowrap " + w}>{m}</span>))}
      </div>
      <div className="flex h-[39px] shrink-0 items-center border-b border-t border-b-[#b8b8b8] border-t-white pb-[2px] pl-[6px]">
        <div className="w-[6px] shrink-0"><Grip w={6} h={29} /></div>
        <Cell><NewDoc /></Cell><Cell><Open /></Cell><Cell><Save /></Cell><Cell><SaveAs /></Cell><Cell><Composer /></Cell><Cell><Manager /></Cell>
        <Sep />
        <Cell on><Touch /></Cell><Cell><Pan /></Cell><Cell><PanSel /></Cell><Cell><ZoomIn /></Cell><Cell><ZoomOut /></Cell><Cell><ZoomNative /></Cell>
        <Cell><ZoomFull /></Cell><Cell><ZoomSel /></Cell><Cell><ZoomLayer /></Cell><Cell><ZoomLast /></Cell><Cell><ZoomNext /></Cell><Cell><Refresh /></Cell>
        <Sep />
        <Cell><Identify /></Cell><Cell><Action /></Cell><Down c="#8e8e8e" /><Cell><SelectBox /></Cell><Down c="#8e8e8e" /><Cell><Expr /></Cell><Down c="#8e8e8e" />
        <Cell><Deselect /></Cell><Cell><TableI /></Cell><Cell><Abacus /></Cell><Cell><Sigma /></Cell><Cell><Measure /></Cell><Down />
        <Cell><MapTip /></Cell><Cell><Bookmark add /></Cell><Cell><Bookmark /></Cell><Cell><Annot /></Cell><Down />
        <Sep />
        <Cell><Book /></Cell>
      </div>
      <div className="flex h-[39px] shrink-0 items-center border-b border-t border-b-[#b8b8b8] border-t-white pb-[2px] pl-[6px]">
        <div className="w-[6px] shrink-0"><Grip w={6} h={29} /></div>
        <Cell><Pencils /></Cell><Cell><Pencil /></Cell><Cell><SaveEdits /></Cell><Cell><Points /></Cell><Cell><Curve /></Cell><Down c="#8e8e8e" />
        <Cell><MoveFeat /></Cell><Cell><NodeTool /></Cell><Cell><Trash /></Cell><Cell><Cut /></Cell><Cell><Copy /></Cell><Cell><Paste /></Cell>
        <Sep />
        <Cell><Label0 /></Cell><Cell><Label1 /></Cell><Cell><Label2 /></Cell><Cell><Label3 /></Cell><Cell><Label4 /></Cell><Cell><Label5 /></Cell><Cell><Label6 /></Cell>
        <Sep />
        <Cell><Csw /></Cell>
        <Sep />
        <Cell><Python /></Cell>
      </div>

      <div className="flex h-[861px] shrink-0">
        {/* layer tools */}
        <div className="flex w-[55px] shrink-0 flex-col border-r border-[#b8b8b8] pt-[6px]">
          <div className="h-[5px] pl-[3px]"><Grip w={48} h={6} /></div>
          <div className="flex flex-col [&>div]:flex [&>div]:h-[34px] [&>div]:items-center [&>div]:pl-[15px]">
            <div><AddVector /></div><div><AddRaster /></div><div><Elephant /></div><div><Feather /></div><div><AddMssql /></div><div><AddOracle /></div>
            <div><AddOracleR /></div><div><AddWms /></div><div><AddWcs /></div><div><AddWfs /></div><div><AddCsv /></div><div><AddVirtual /></div>
            <div className="-ml-[7px] gap-[7px]"><NewVector /><svg width="9" height="5" viewBox="0 0 9 5"><path d="M0 0h9L4.500 5z" /></svg></div>
            <div><Sat star /></div>
          </div>
          <div className="flex h-[14px] items-end pb-px pl-[3px]"><Grip w={48} h={6} /></div>
          <div className="flex flex-col [&>div]:flex [&>div]:h-[34px] [&>div]:items-center [&>div]:pl-[15px]">
            <div><Cross /></div><div><Compass /></div><div><Sat /></div><div><Simplify /></div><div><Topo /></div>
          </div>
        </div>

        {/* docks */}
        <div className="flex w-[317px] shrink-0 flex-col pl-px pt-[3px]">
          <DockTitle title="Explorateur" left={103} right={102} />
          <div className="mt-[8px] flex h-[18px] pl-px">
            <DCell><AddSel /></DCell><DCell><Refresh s={16} /></DCell><DCell><Funnel /></DCell><DCell><TreeArrow /></DCell><DCell><Info /></DCell>
          </div>
          <div className="mt-[14px] flex h-[106px] shrink-0 rounded-[3px] border border-[#b0b0b0] bg-white">
            <div className="flex-1 overflow-hidden">
              {tree.map((r) => (
                <div key={r.t} className={"flex items-center pl-[5px] " + r.h}>
                  <svg width="15" height="20" viewBox="0 0 15 20" className="shrink-0 overflow-visible">
                    <path d="M5.500 0v20M6 10.500h9" stroke="#a5a5a5" strokeDasharray="1 1" />
                    {r.box && (<><rect x="1.500" y="5.500" width="8" height="8" rx="1" fill="#fff" stroke="#8a8a8a" /><path d="M3.500 9.500h4M5.500 7.500v4" stroke="#444" /></>)}
                  </svg>
                  <div className={r.box ? "ml-[5px] mr-[7px]" : "ml-[3px] mr-[7px]"}>{r.icon}</div>
                  <span>{r.t}</span>
                </div>
              ))}
            </div>
            <div className="flex w-[17px] flex-col bg-[#ededed]">
              <div className="flex h-4 items-center justify-center rounded-[2px] border border-[#8e8e8e] bg-[#f5f5f5]"><Tri up /></div>
              <div className="h-[26px] rounded-[2px] border border-[#8e8e8e] bg-gradient-to-r from-white to-[#dcdcdc]" />
              <div className="h-[28px]" />
              <div className="flex h-4 items-center justify-center rounded-[2px] border border-[#8e8e8e] bg-[#f5f5f5]"><Tri up /></div>
              <div className="flex h-4 items-center justify-center rounded-[2px] border border-[#8e8e8e] bg-[#f5f5f5]"><Tri /></div>
            </div>
          </div>
          <div className="flex h-[9px] items-center justify-center"><Dots w={103} h={3} /></div>
          <DockTitle title="Couches" left={109} right={109} />
          <div className="mt-[8px] flex h-[18px] pl-px">
            <DCell><AddGroup /></DCell><DCell><Eye /></DCell><DCell><Funnel /></DCell><DCell><Eps /></DCell>
            <DCell w="w-[14px]"><svg width="9" height="5" viewBox="0 0 9 5"><path d="M0 0h9L4.500 5z" fill="#8e8e8e" /></svg></DCell>
            <DCell w="w-[29px]"><TreeArrow down /></DCell><DCell><TreeArrow /></DCell><DCell><RemoveSel /></DCell>
          </div>
          <div className="mt-[13px] h-[197px] shrink-0 rounded-[3px] border border-[#b0b0b0] bg-white" />
          <div className="flex h-[8px] items-center justify-center"><Dots w={103} h={3} /></div>
          <DockTitle title="Chemin le plus court" left={78} right={77} />
          <div className="flex w-[307px] flex-col pl-[8px] pt-[12px]">
            <span>Départ</span>
            <div className="mt-[4px] flex items-center justify-between"><Field className="w-[262px]" /><PickBtn /></div>
            <span className="mt-[8px]">Arrêt</span>
            <div className="mt-[4px] flex items-center justify-between"><Field className="w-[262px]" /><PickBtn /></div>
            <div className="mt-[8px] flex items-center justify-between"><span>Critère</span><Combo className="w-[147px]">Longueur</Combo></div>
            <div className="mt-[7px] flex items-center justify-between"><span>Longueur</span><Field className="w-[241px]" /></div>
            <div className="mt-[7px] flex items-center justify-between"><span>Temps</span><Field className="w-[257px]" /></div>
            <div className="mt-[9px] flex justify-between"><Btn>Calculer</Btn><Btn>Exporter</Btn><Btn>Effacer</Btn></div>
            <Btn className="mt-[9px] !h-[31px] !w-full gap-[4px]"><Buoy />Aide</Btn>
          </div>
        </div>
        <div className="flex w-[18px] shrink-0 pl-[2px] pt-[288px]"><Dots w={3} h={284} /></div>

        {/* welcome page */}
        <div className="flex w-[1518px] flex-col">
          <h1 className="flex h-[50px] items-center pt-[8px] text-[26.700px] font-bold leading-8">Projets récents</h1>
          <div className="h-[804px] rounded-[3px] border border-[#b8b8b8] bg-white" />
        </div>
      </div>

      {/* status bar */}
      <div className="flex h-[36px] shrink-0 items-center pb-[3px] pt-[3px] pl-[974px]">
        <span className="w-[72px]">Coordonnée</span>
        <Field className="w-[291px]" />
        <div className="flex h-[29px] w-[20px] items-center justify-center rounded-[3px] border border-[#858585] bg-[#f3f3f3]">
          <Svg s={16}>
            <rect x="3" y="1" width="11" height="15" rx="5.500" transform="rotate(-30 8.500 8.500)" fill="#d5d5d5" stroke="#222" strokeWidth="2" />
            <path d="M9 .5l4 9M4 6l4 8" stroke="#222" strokeWidth="1.800" />
            <circle cx="15" cy="16" r="6" fill="#e4e4e4" stroke="#222" strokeWidth="2" /><circle cx="15" cy="16" r="2" stroke="#222" strokeWidth="1.800" />
            <path d="M17 5l5-5M1 0l3 2" stroke="#444" strokeWidth="1.300" />
          </Svg>
        </div>
        <span className="ml-[9px] w-[53px]">Échelle</span>
        <div className="flex h-[22px] w-[98px] items-center rounded-[3px] border border-[#b4b4b4] bg-white">
          <span className="flex-1 whitespace-nowrap tracking-[0.05px]">1:40 188 468</span>
          <div className="flex h-full w-[16px] shrink-0 items-center justify-center border-l border-[#b8b8b8] bg-gradient-to-b from-[#f8f8f8] to-[#dcdcdc]"><Tri /></div>
        </div>
        <span className="ml-[9px] w-[56px]">Rotation</span>
        <div className="flex h-[29px] w-[108px] items-center rounded-[3px] border border-[#b4b4b4] bg-white">
          <span className="flex-1 pl-1 pt-0.5">0,0</span>
          <div className="flex h-full w-[16px] flex-col border-l border-[#b8b8b8] bg-[#f0f0f0]">
            <div className="flex flex-1 items-center justify-center border-b border-[#b8b8b8]"><Tri up /></div>
            <div className="flex flex-1 items-center justify-center"><Tri /></div>
          </div>
        </div>
        <div className="ml-[6px] flex h-4 w-4 items-center justify-center border border-[#b0b0b0] bg-[#fafafa]">
          <svg width="12" height="11" viewBox="0 0 12 11" stroke="#000" strokeWidth="3"><path d="M1 .5l10 10M11 .5l-10 10" /></svg>
        </div>
        <span className="ml-[6px] w-[54px]">Rendu</span>
        <Svg s={20}>
          <circle cx="12" cy="12" r="11" fill="#8a8a8a" />
          <path d="M12 1v22M1 12h22M12 3l9 9-9 9-9-9z" stroke="#ddd" /><ellipse cx="12" cy="12" rx="5" ry="11" stroke="#ddd" />
        </Svg>
        <span className="ml-[4px] w-[87px]">EPSG:4326</span>
        <Svg s={20}>
          <path d="M12 2c7 0 12 3.500 12 9 0 3-1.500 5-3 6l2 6-7-3.500c-8 1.500-16-1-16-8.500 0-5.500 5-9 12-9z" fill="#5a5a5a" />
          <circle cx="6.500" cy="11" r="1.700" fill="#fff" /><circle cx="12" cy="11" r="1.700" fill="#fff" /><circle cx="17.500" cy="11" r="1.700" fill="#fff" />
        </Svg>
      </div>

      <Dialog />

      {/* red annotations drawn over the window */}
      <svg width="142" height="86" viewBox="0 0 142 86" className="absolute left-[1068px] top-[518px]">
        <ellipse cx="71.500" cy="43" rx="67.500" ry="39" fill="none" stroke="#ee1c24" strokeWidth="5" />
      </svg>
      <div className="absolute left-[1236px] top-[478px] whitespace-nowrap font-['Liberation_Sans',sans-serif] text-[32px] leading-[38px] tracking-[-0.04px] text-[#ee1c24] [font-stretch:normal]">
        Ne pas toucher à l'encodage
      </div>
    </div>
  );
}
